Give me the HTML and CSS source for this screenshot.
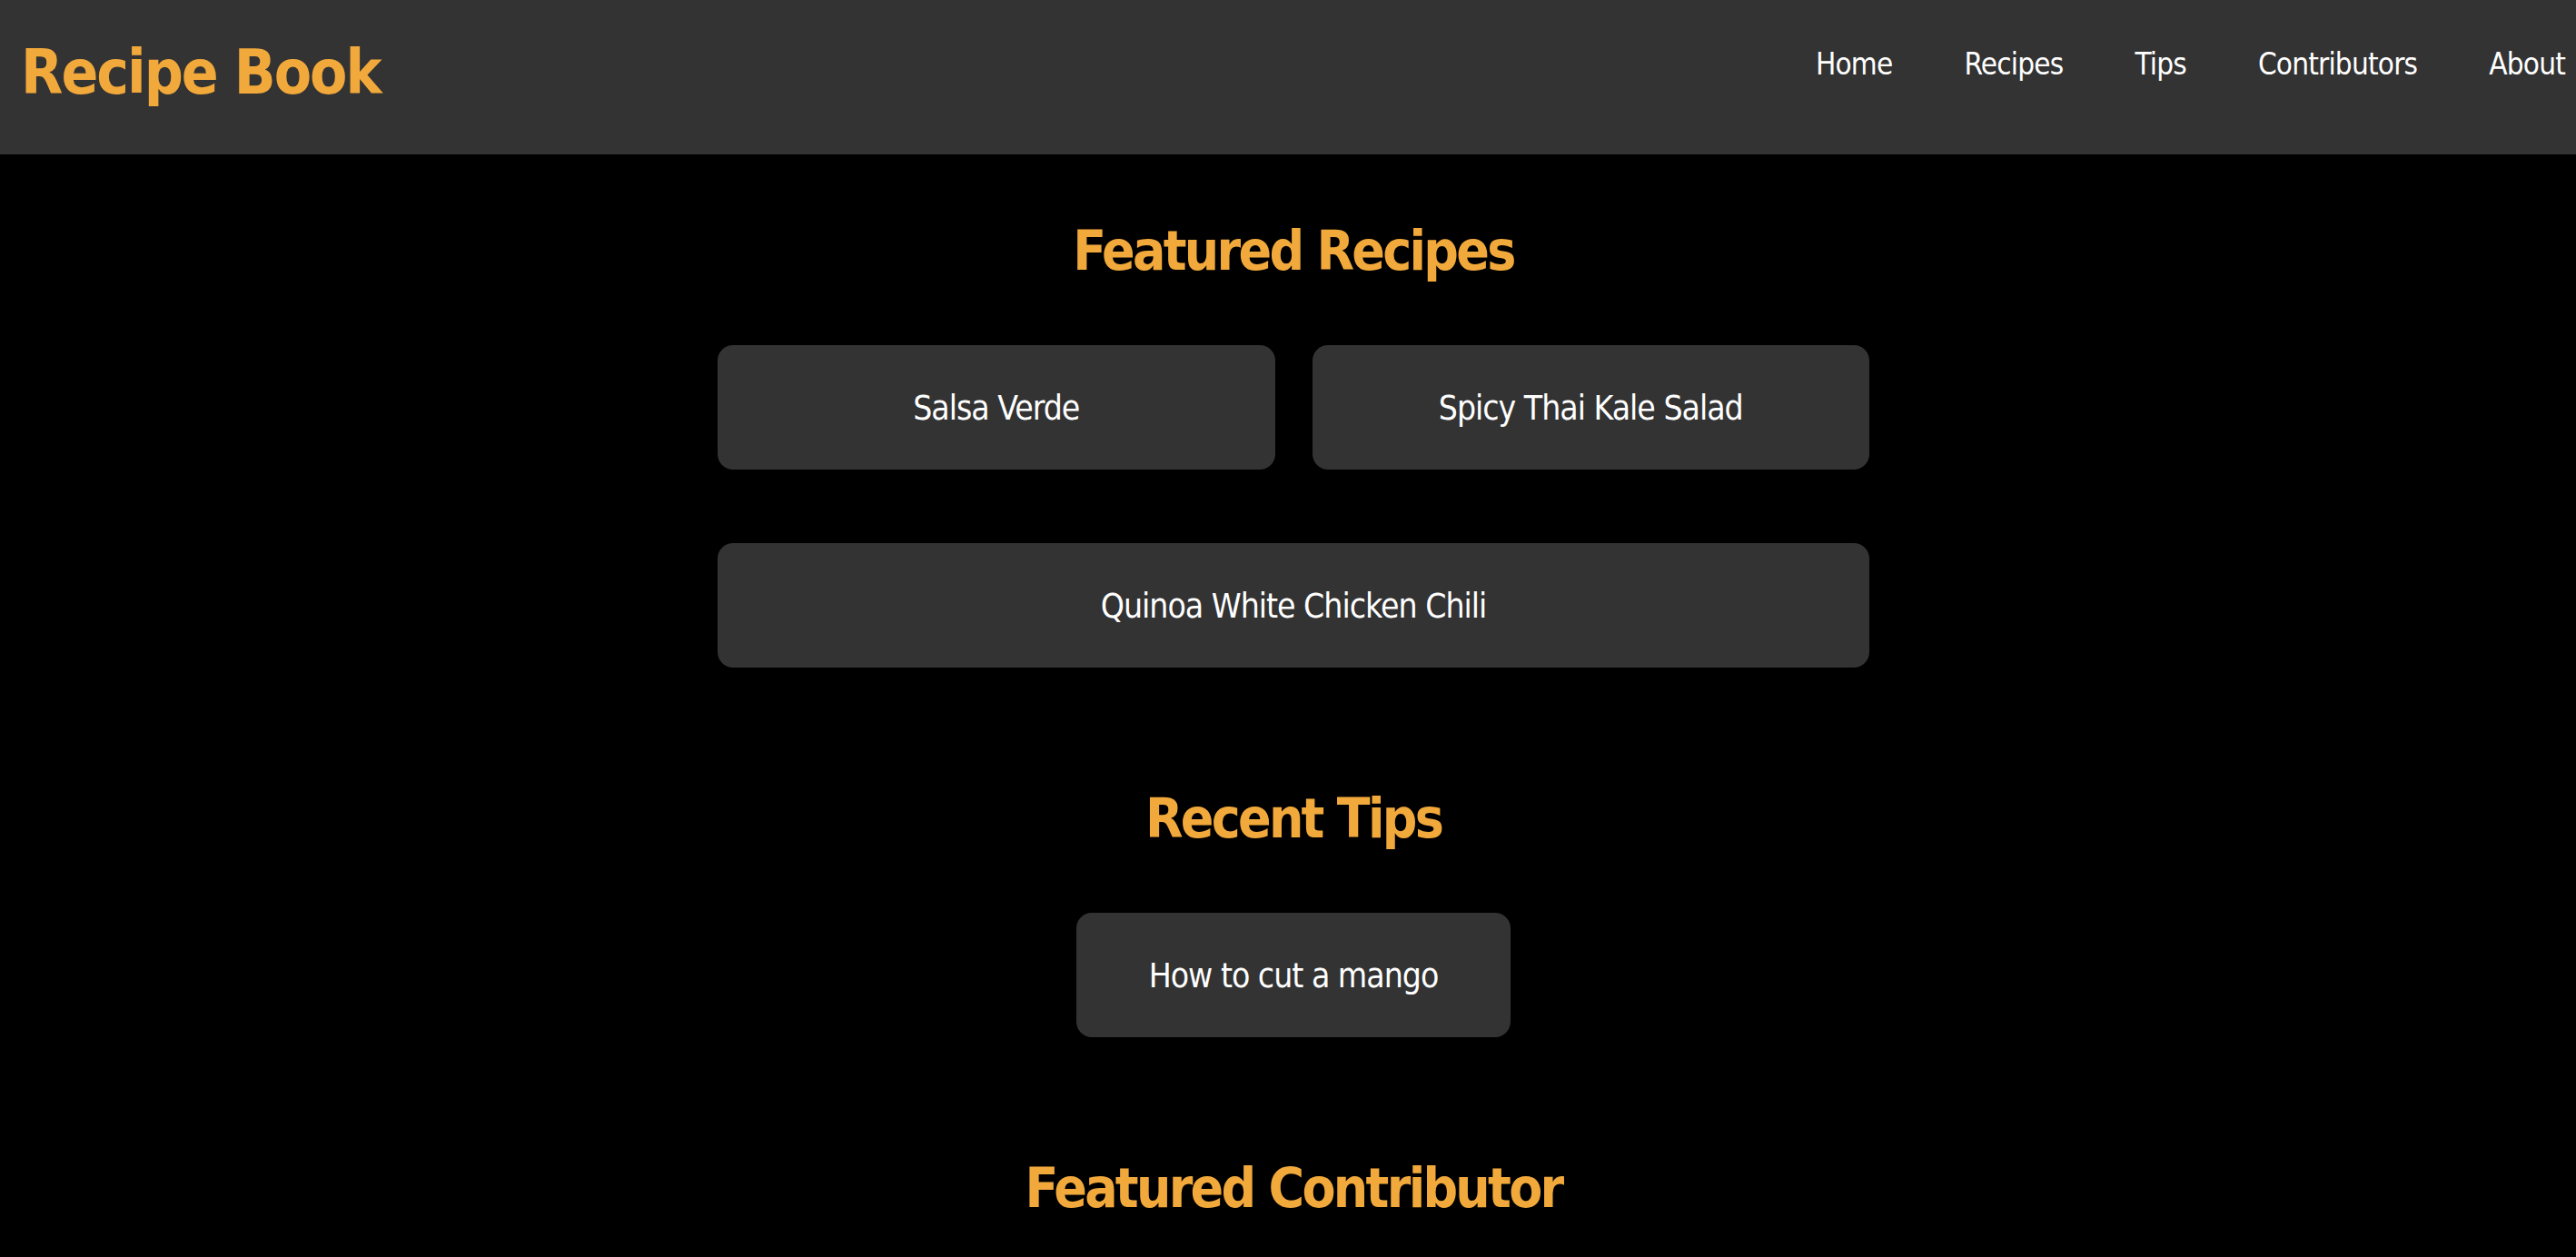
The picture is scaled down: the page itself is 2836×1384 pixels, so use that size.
FILE: index.html
```html
<!DOCTYPE html>
<html lang="en">
<head>
<meta charset="utf-8">
<title>Recipe Book</title>
<link rel="stylesheet" href="styles.css">
</head>
<body>
<header class="site-header">
  <div class="logo">Recipe Book</div>
  <nav class="nav">
    <a class="nav-link" href="#">Home</a>
    <a class="nav-link" href="#">Recipes</a>
    <a class="nav-link" href="#">Tips</a>
    <a class="nav-link" href="#">Contributors</a>
    <a class="nav-link" href="#">About</a>
  </nav>
</header>
<main class="main">
  <section class="section">
    <h2 class="section-title">Featured Recipes</h2>
    <div class="recipe-grid">
      <div class="card">Salsa Verde</div>
      <div class="card">Spicy Thai Kale Salad</div>
      <div class="card card-wide">Quinoa White Chicken Chili</div>
    </div>
  </section>
  <section class="section">
    <h2 class="section-title">Recent Tips</h2>
    <div class="tips">
      <div class="card card-tip">How to cut a mango</div>
    </div>
  </section>
  <section class="section">
    <h2 class="section-title">Featured Contributor</h2>
  </section>
</main>
</body>
</html>
```
FILE: styles.css
```css
html, body {
  margin: 0;
  padding: 0;
  background: #000;
}
body {
  font-family: "DejaVu Sans Condensed", "DejaVu Sans", sans-serif;
  font-stretch: condensed;
  color: #fff;
}
.site-header {
  height: 170px;
  background: #333333;
  display: flex;
  justify-content: space-between;
  align-items: flex-start;
  padding: 0 12px 0 23px;
  box-sizing: border-box;
}
.logo {
  margin-top: 47px;
  font-size: 67px;
  line-height: 67px;
  font-weight: bold;
  color: #f2a93b;
  letter-spacing: -2px;
}
.nav {
  display: flex;
  gap: 79px;
  margin-top: 54px;
}
.nav-link {
  color: #fff;
  text-decoration: none;
  font-size: 33px;
  line-height: 33px;
  letter-spacing: -0.8px;
}
.main {
  padding-left: 12px;
  display: flex;
  flex-direction: column;
  align-items: center;
}
.section {
  width: 1268px;
  margin-bottom: 60px;
}
.section-title {
  margin: 70px 0 68px;
  text-align: center;
  color: #f2a93b;
  font-size: 60px;
  line-height: 72px;
  font-weight: bold;
  letter-spacing: -2.7px;
}
.recipe-grid {
  display: grid;
  grid-template-columns: 1fr 1fr;
  column-gap: 41px;
  row-gap: 81px;
}
.card {
  background: #333333;
  border-radius: 17px;
  padding: 47px 80px 45px;
  font-size: 37px;
  line-height: 45px;
  text-align: center;
  letter-spacing: -1px;
}
.card-wide {
  grid-column: 1 / span 2;
}
.tips {
  display: flex;
  justify-content: center;
}
```
